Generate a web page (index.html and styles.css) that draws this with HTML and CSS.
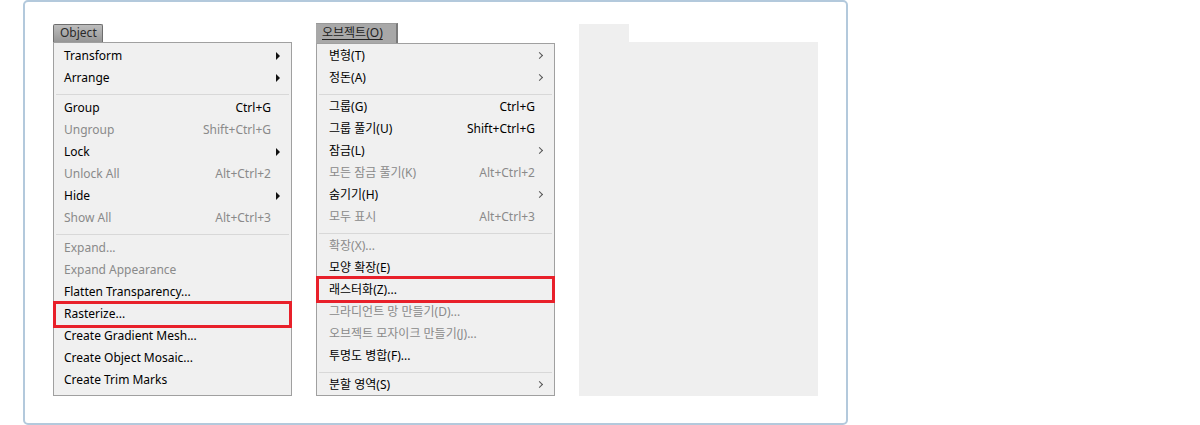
FILE: index.html
```html
<!DOCTYPE html>
<html lang="ko">
<head>
<meta charset="utf-8">
<link rel="stylesheet" href="styles.css">
</head>
<body>
<div class="frame">
  <div class="col">
    <div class="tab tab-en">Object</div>
    <div class="menu menu-en">
      <div class="row"><span class="label">Transform</span><span class="sc"></span><span class="arr tri"></span></div>
      <div class="row"><span class="label">Arrange</span><span class="sc"></span><span class="arr tri"></span></div>
      <div class="sep"></div>
      <div class="row"><span class="label">Group</span><span class="sc">Ctrl+G</span><span class="arr"></span></div>
      <div class="row dis"><span class="label">Ungroup</span><span class="sc">Shift+Ctrl+G</span><span class="arr"></span></div>
      <div class="row"><span class="label">Lock</span><span class="sc"></span><span class="arr tri"></span></div>
      <div class="row dis"><span class="label">Unlock All</span><span class="sc">Alt+Ctrl+2</span><span class="arr"></span></div>
      <div class="row"><span class="label">Hide</span><span class="sc"></span><span class="arr tri"></span></div>
      <div class="row dis"><span class="label">Show All</span><span class="sc">Alt+Ctrl+3</span><span class="arr"></span></div>
      <div class="sep"></div>
      <div class="row dis"><span class="label">Expand...</span><span class="sc"></span><span class="arr"></span></div>
      <div class="row dis"><span class="label">Expand Appearance</span><span class="sc"></span><span class="arr"></span></div>
      <div class="row"><span class="label">Flatten Transparency...</span><span class="sc"></span><span class="arr"></span></div>
      <div class="row hl"><span class="label">Rasterize...</span><span class="sc"></span><span class="arr"></span></div>
      <div class="row"><span class="label">Create Gradient Mesh...</span><span class="sc"></span><span class="arr"></span></div>
      <div class="row"><span class="label">Create Object Mosaic...</span><span class="sc"></span><span class="arr"></span></div>
      <div class="row"><span class="label">Create Trim Marks</span><span class="sc"></span><span class="arr"></span></div>
    </div>
  </div>
  <div class="col">
    <div class="tab tab-ko"><u>오브젝트(O)</u></div>
    <div class="menu menu-ko">
      <div class="row"><span class="label">변형(T)</span><span class="sc"></span><span class="arr chev"></span></div>
      <div class="row"><span class="label">정돈(A)</span><span class="sc"></span><span class="arr chev"></span></div>
      <div class="sep"></div>
      <div class="row"><span class="label">그룹(G)</span><span class="sc">Ctrl+G</span><span class="arr"></span></div>
      <div class="row"><span class="label">그룹 풀기(U)</span><span class="sc">Shift+Ctrl+G</span><span class="arr"></span></div>
      <div class="row"><span class="label">잠금(L)</span><span class="sc"></span><span class="arr chev"></span></div>
      <div class="row dis"><span class="label">모든 잠금 풀기(K)</span><span class="sc">Alt+Ctrl+2</span><span class="arr"></span></div>
      <div class="row"><span class="label">숨기기(H)</span><span class="sc"></span><span class="arr chev"></span></div>
      <div class="row dis"><span class="label">모두 표시</span><span class="sc">Alt+Ctrl+3</span><span class="arr"></span></div>
      <div class="sep"></div>
      <div class="row dis"><span class="label">확장(X)...</span><span class="sc"></span><span class="arr"></span></div>
      <div class="row"><span class="label">모양 확장(E)</span><span class="sc"></span><span class="arr"></span></div>
      <div class="row hl hl-ko"><span class="label">래스터화(Z)...</span><span class="sc"></span><span class="arr"></span></div>
      <div class="row dis"><span class="label">그라디언트 망 만들기(D)...</span><span class="sc"></span><span class="arr"></span></div>
      <div class="row dis"><span class="label">오브젝트 모자이크 만들기(J)...</span><span class="sc"></span><span class="arr"></span></div>
      <div class="row"><span class="label">투명도 병합(F)...</span><span class="sc"></span><span class="arr"></span></div>
      <div class="sep"></div>
      <div class="row"><span class="label">분할 영역(S)</span><span class="sc"></span><span class="arr chev"></span></div>
    </div>
  </div>
  <div class="col">
    <div class="tab tab-blank"></div>
    <div class="menu menu-blank"></div>
  </div>
</div>
</body>
</html>
```

FILE: styles.css
```css
html, body {
  margin: 0;
  padding: 0;
  background: #ffffff;
}

body {
  font-family: "Noto Sans", "Noto Sans CJK KR", sans-serif;
  font-size: 12px;
  color: #000;
}

.frame {
  margin-left: 23px;
  width: 825px;
  height: 425px;
  box-sizing: border-box;
  border: 2px solid #b3c9dc;
  border-radius: 5px;
  display: flex;
  gap: 24px;
  padding: 22px 0 0 28px;
}

.col {
  width: 239px;
  display: flex;
  flex-direction: column;
}

.tab {
  height: 18px;
  box-sizing: border-box;
  line-height: 16px;
  font-size: 12px;
  align-self: flex-start;
  flex-shrink: 0;
}

.tab-en {
  width: 50px;
  padding-left: 6px;
  color: #2a2a2a;
  background: linear-gradient(#bdbdbd, #969696);
  border: 1px solid #6e6e6e;
  border-bottom: none;
  border-radius: 2px 2px 0 0;
}

.tab-ko {
  width: 82px;
  height: 20px;
  margin-top: -1px;
  padding-left: 6px;
  line-height: 18px;
  color: #222;
  background: #a8a8a8;
  border-right: 2px solid #7a7a7a;
  border-top: 1px solid #999;
}

.tab-ko u {
  text-decoration-thickness: 1px;
  text-underline-offset: 2px;
}

.tab-blank {
  width: 50px;
  background: #efefef;
}

.menu {
  height: 354px;
  box-sizing: border-box;
  background: #f0f0f0;
  border: 1px solid #a0a0a0;
  padding-top: 2px;
  display: flex;
  flex-direction: column;
}

.menu-ko {
  height: 353px;
  padding-top: 1px;
}

.menu-blank {
  border: none;
  background: #efefef;
}

.row {
  position: relative;
  flex-shrink: 0;
  height: 22px;
  line-height: 22px;
  display: flex;
  padding-left: 10px;
  white-space: nowrap;
}

.menu-ko .row {
  padding-left: 12px;
}

.label {
  flex: 1;
}

.sc {
  text-align: right;
}

.arr {
  width: 20px;
  position: relative;
}

.menu-ko .arr {
  width: 19px;
}

.tri::before {
  content: "";
  position: absolute;
  left: 5px;
  top: 7px;
  border-left: 4px solid #111;
  border-top: 4px solid transparent;
  border-bottom: 4px solid transparent;
}

.chev::before {
  content: "";
  position: absolute;
  left: 2px;
  top: 8px;
  width: 4px;
  height: 4px;
  border-top: 1px solid #555;
  border-right: 1px solid #555;
  transform: rotate(45deg);
}

.dis {
  color: #8a8a8a;
}

.sep {
  flex-shrink: 0;
  height: 6px;
  margin: 0 2px 2px;
  box-sizing: border-box;
  border-bottom: 1px solid #d8d8d8;
}

.menu-ko .sep {
  margin-bottom: 1px;
}

.hl::after {
  content: "";
  position: absolute;
  left: -1px;
  right: -1px;
  top: -2px;
  bottom: -3px;
  border: 3px solid #e8202a;
}

.hl-ko::after {
  top: -3px;
  bottom: -2px;
}
```
